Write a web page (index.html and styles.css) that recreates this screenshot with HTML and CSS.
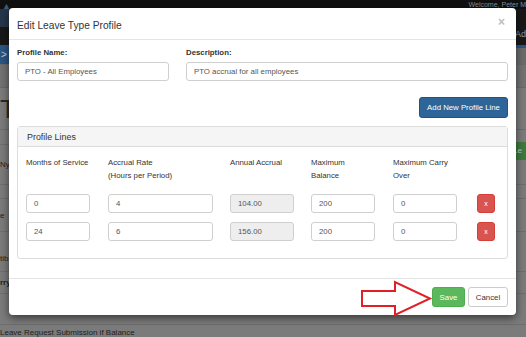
FILE: index.html
```html
<!DOCTYPE html>
<html>
<head>
<meta charset="utf-8">
<link rel="stylesheet" href="styles.css">
</head>
<body>
<div class="page">
  <div class="topbar"><span class="logo-tip">▲</span><span class="welcome">Welcome, Peter M</span></div>
  <div class="navbar">
    <div class="brand"></div>
    <div class="nav-line"><span class="nav-right">Ad</span></div>
  </div>
  <div class="crumb"><span class="chev">&gt;</span></div>
  <div class="subbar"></div>
  <div class="content">
    <div class="title-row"><span class="big-t">T</span></div>
    <div class="row row-a"></div>
    <div class="row row-b"><span>Ny</span><span class="green-btn">Le</span></div>
    <div class="row row-c"></div>
    <div class="row row-d"><span>e</span></div>
    <div class="row row-e"><span>tib</span></div>
    <div class="row row-f"><span class="bold">rry</span></div>
    <div class="row row-g"></div>
    <div class="bottom-text">Leave Request Submission if Balance</div>
  </div>
</div>

<div class="modal">
  <div class="modal-header">
    <h4 class="modal-title">Edit Leave Type Profile</h4>
    <span class="close">×</span>
  </div>
  <div class="modal-body">
    <div class="fields">
      <div class="field f-name">
        <label>Profile Name:</label>
        <div class="input">PTO - All Employees</div>
      </div>
      <div class="field f-desc">
        <label>Description:</label>
        <div class="input">PTO accrual for all employees</div>
      </div>
    </div>
    <div class="actions"><button class="btn btn-primary">Add New Profile Line</button></div>
    <div class="panel">
      <div class="panel-heading">Profile Lines</div>
      <div class="panel-body">
        <div class="grid">
          <div class="th">Months of Service</div>
          <div class="th">Accrual Rate<br>(Hours per Period)</div>
          <div class="th">Annual Accrual</div>
          <div class="th">Maximum<br>Balance</div>
          <div class="th">Maximum Carry<br>Over</div>
          <div class="th"></div>

          <div class="input w64 mt">0</div>
          <div class="input w105 mt">4</div>
          <div class="input w64 mt disabled">104.00</div>
          <div class="input w64 mt">200</div>
          <div class="input w64 mt">0</div>
          <div class="mt"><button class="btn-del">x</button></div>

          <div class="input w64">24</div>
          <div class="input w105">6</div>
          <div class="input w64 disabled">156.00</div>
          <div class="input w64">200</div>
          <div class="input w64">0</div>
          <div><button class="btn-del">x</button></div>
        </div>
      </div>
    </div>
  </div>
  <div class="modal-footer">
    <button class="btn btn-success">Save</button>
    <button class="btn btn-default">Cancel</button>
  </div>
</div>

<svg class="arrow" width="526" height="337" viewBox="0 0 526 337">
  <polygon points="362,291 395,291 395,282 430,298.5 395,315 395,306 362,306" fill="none" stroke="#e01f26" stroke-width="2" stroke-linejoin="miter"/>
</svg>
</body>
</html>
```

FILE: styles.css
```css
* { box-sizing: border-box; }
html, body {
  margin: 0;
  padding: 0;
  width: 526px;
  height: 337px;
  overflow: hidden;
  font-family: "Liberation Sans", Arial, sans-serif;
  background: #7b7b7b;
}

/* ---------- background page (darkened by backdrop) ---------- */
.page {
  width: 526px;
  height: 337px;
  display: flex;
  flex-direction: column;
  color: #1e1e1e;
  font-size: 8px;
}
.topbar {
  height: 9px;
  background: #101010;
  display: flex;
  justify-content: space-between;
  align-items: center;
  overflow: hidden;
}
.logo-tip {
  color: #3f5a78;
  font-size: 9px;
  line-height: 9px;
  margin-left: 2px;
  margin-top: 3px;
}
.welcome {
  color: #8a8a8a;
  font-size: 7px;
  margin-right: 0;
}
.navbar {
  height: 36px;
  background: #181818;
  display: flex;
  flex-direction: column;
}
.brand {
  height: 18px;
  width: 40px;
  background: #26364a;
}
.nav-line {
  flex: 1;
  display: flex;
  justify-content: flex-end;
  align-items: center;
}
.nav-right {
  color: #9a9a9a;
  font-size: 9px;
  margin-right: 0;
  margin-top: -4px;
}
.crumb {
  height: 20px;
  background: #6b6b6b;
  border-top: 3px solid #2b5682;
  display: flex;
  align-items: center;
}
.crumb .chev {
  color: #c8d0dc;
  font-size: 10px;
  background: #2b5682;
  width: 40px;
  height: 17px;
  line-height: 15px;
  margin-top: -3px;
  padding-left: 1px;
}
.subbar {
  height: 23px;
  background: #727272;
  border-bottom: 1px solid #6a6a6a;
}
.content {
  flex: 1;
  display: flex;
  flex-direction: column;
}
.title-row {
  height: 42px;
  display: flex;
  align-items: center;
  border-bottom: 1px solid #6c6c6c;
}
.big-t {
  font-size: 26px;
  color: #2a2a2a;
  margin-left: 0;
  margin-top: 2px;
}
.row {
  display: flex;
  justify-content: space-between;
  align-items: center;
  border-bottom: 1px solid #6e6e6e;
}
.row-a { height: 15px; }
.row-b { height: 40px; }
.row-c { height: 14px; }
.row-d { height: 33px; }
.row-e { height: 40px; align-items: flex-end; padding-bottom: 8px; }
.row-f { height: 22px; }
.row-g { height: 31px; }
.bold { font-weight: bold; }
.green-btn {
  background: #3e7a3e;
  color: #b8cdb8;
  font-size: 8px;
  width: 14px;
  height: 18px;
  line-height: 18px;
  padding-left: 1px;
  margin-top: -28px;
}
.bottom-text {
  font-size: 8px;
  color: #1e1e1e;
  margin-top: 3px;
}

/* ---------- modal ---------- */
.modal {
  position: absolute;
  left: 9px;
  top: 8px;
  width: 507px;
  height: 307px;
  background: #fff;
  border-radius: 4px;
  box-shadow: 0 3px 8px rgba(0, 0, 0, 0.55);
  display: flex;
  flex-direction: column;
  color: #333;
  font-size: 8px;
}
.modal-header {
  height: 32px;
  border-bottom: 1px solid #e5e5e5;
  display: flex;
  align-items: center;
  justify-content: space-between;
  padding: 3px 9px 0 8px;
}
.modal-title {
  margin: 0;
  font-size: 10.2px;
  font-weight: normal;
  color: #333;
}
.close {
  color: #bdbdbd;
  font-size: 12px;
  font-weight: bold;
  margin-top: -6px;
  margin-right: 2px;
}
.modal-body {
  flex: 1;
  padding: 7px 8px 19px 8px;
  display: flex;
  flex-direction: column;
}
.fields {
  display: flex;
  gap: 17px;
}
.f-name { width: 152px; }
.f-desc { flex: 1; }
.field label {
  display: block;
  font-weight: bold;
  font-size: 7.8px;
  line-height: 12px;
  margin-bottom: 3px;
  color: #333;
}
.input {
  height: 19px;
  border: 1px solid #cfcfcf;
  border-radius: 3px;
  padding: 0 7px;
  line-height: 17px;
  font-size: 7.8px;
  color: #555;
  background: #fff;
}
.input.disabled { background: #eeeeee; }
.actions {
  display: flex;
  justify-content: flex-end;
  margin-top: 16px;
}
.btn {
  font-family: "Liberation Sans", Arial, sans-serif;
  font-size: 7.8px;
  border-radius: 3px;
  border: 1px solid transparent;
  cursor: pointer;
}
.btn-primary {
  width: 89px;
  height: 21px;
  background: #2e6599;
  border-color: #25527c;
  color: #fff;
  padding: 0;
}
.panel {
  margin-top: 8px;
  border: 1px solid #dddddd;
  border-radius: 3px;
  flex: 1;
  display: flex;
  flex-direction: column;
}
.panel-heading {
  height: 20px;
  background: #f5f5f5;
  border-bottom: 1px solid #dddddd;
  padding: 0 9px;
  display: flex;
  align-items: center;
  font-size: 8.9px;
  color: #333;
}
.panel-body {
  padding: 9px 8px 0 8px;
}
.grid {
  display: grid;
  grid-template-columns: 82px 122px 81px 82px 84px 1fr;
  row-gap: 9px;
}
.th {
  font-size: 7.8px;
  line-height: 13px;
  color: #333;
}
.mt { margin-top: 3px; }
.w64 { width: 64px; }
.w105 { width: 105px; }
.btn-del {
  width: 18px;
  height: 19px;
  background: #d9534f;
  border: 1px solid #d43f3a;
  border-radius: 3px;
  color: #fff;
  font-size: 7px;
  padding: 0;
  font-family: "Liberation Sans", Arial, sans-serif;
}
.modal-footer {
  height: 37px;
  border-top: 1px solid #e5e5e5;
  display: flex;
  justify-content: flex-end;
  align-items: flex-start;
  gap: 3px;
  padding: 8px 8px 0 0;
}
.btn-success {
  width: 33px;
  height: 20px;
  background: #5cb85c;
  border-color: #4cae4c;
  color: #fff;
  padding: 0;
}
.btn-default {
  width: 40px;
  height: 20px;
  background: #fff;
  border-color: #cccccc;
  color: #333;
  padding: 0;
}

.arrow {
  position: absolute;
  left: 0;
  top: 0;
  pointer-events: none;
}
```
